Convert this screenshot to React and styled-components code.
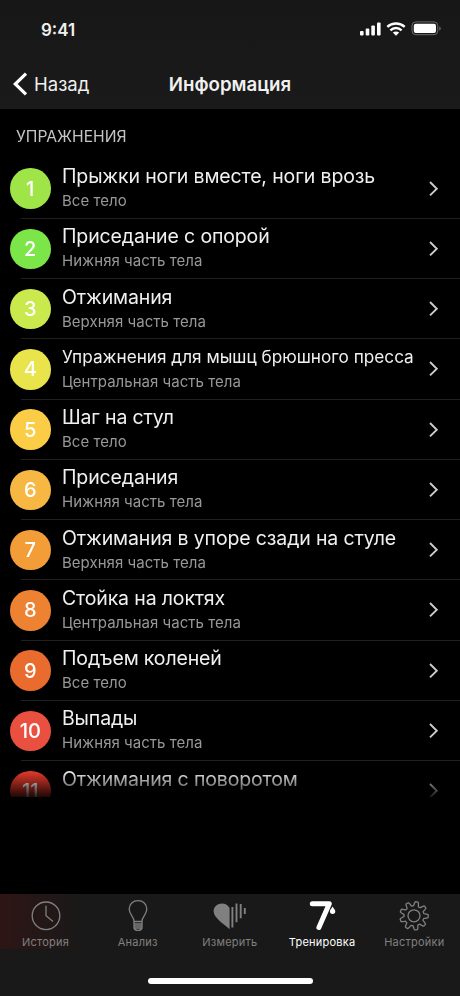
import React from 'react';
import styled, { createGlobalStyle } from 'styled-components';

const GlobalStyle = createGlobalStyle`
  * {
    box-sizing: border-box;
  }
  body {
    margin: 0;
    background: #000;
  }
`;

const Screen = styled.div`
  display: flex;
  flex-direction: column;
  width: 460px;
  height: 996px;
  overflow: hidden;
  background: #000;
  color: #f0f0f0;
  font-family: Inter, 'Liberation Sans', sans-serif;
`;

const Header = styled.header`
  flex: none;
  height: 109px;
  background: linear-gradient(#171717, #1a1a1a);
`;

const StatusBar = styled.div`
  display: flex;
  align-items: center;
  justify-content: space-between;
  height: 59px;
  padding: 0 17px 0 41px;
`;

const Clock = styled.span`
  font-size: 17px;
  font-weight: 600;
  line-height: 20px;
`;

const StatusIcons = styled.svg`
  display: block;
  width: 84px;
  height: 20px;
`;

const NavBar = styled.nav`
  display: grid;
  grid-template-columns: 1fr auto 1fr;
  align-items: center;
  height: 50px;
  padding: 0 12px;
`;

const BackButton = styled.a`
  display: flex;
  align-items: center;
  gap: 6px;
  font-size: 18.5px;
`;

const NavTitle = styled.h1`
  margin: 0;
  font-size: 18.7px;
  font-weight: 600;
`;

const List = styled.main`
  flex: none;
  height: 688px;
  overflow: hidden;
  mask-image: linear-gradient(#000 662px, transparent 692px);
`;

const SectionTitle = styled.h2`
  display: flex;
  align-items: center;
  height: 49.5px;
  margin: 0;
  padding: 5px 0 0 16px;
  color: #c4c4c4;
  font-size: 15.65px;
  font-weight: 400;
`;

const Row = styled.div`
  display: flex;
  align-items: center;
  height: 60.25px;
  padding: 0 20px 0 10px;
  background: linear-gradient(#202020, #202020) 21px 100% / 100% 1px no-repeat;
`;

const Badge = styled.div`
  display: flex;
  flex: none;
  align-items: center;
  justify-content: center;
  width: 40.5px;
  height: 40.5px;
  border-radius: 50%;
  background: ${(props) => props.$color};
  color: #fff;
  font-size: 20px;
  font-weight: 500;
`;

const Labels = styled.div`
  flex: 1;
  height: 51px;
  margin-left: 11.5px;
  white-space: nowrap;
`;

const Name = styled.div`
  height: 26px;
  font-size: ${(props) => (props.$small ? 17.2 : 19.5)}px;
  line-height: 26px;
  letter-spacing: ${(props) => (props.$small ? 0 : -0.14)}px;
`;

const Area = styled.div`
  height: 24px;
  color: #989898;
  font-size: 15px;
  line-height: 24px;
  letter-spacing: 0.03px;
`;

const Chevron = styled.svg`
  flex: none;
  width: 12px;
  height: 18px;
`;

const Spacer = styled.div`
  flex: 1;
`;

const Footer = styled.footer`
  flex: none;
  height: 102px;
  background: linear-gradient(90deg, rgba(75, 16, 16, 0.42), transparent) 0 0 / 85px 55px no-repeat, #191919;
`;

const Tabs = styled.div`
  display: grid;
  grid-template-columns: repeat(5, 92.2px);
  height: 84px;
  margin-left: -0.6px;
`;

const Tab = styled.div`
  display: flex;
  flex-direction: column;
  align-items: center;
  padding-top: 5px;
  color: ${(props) => (props.$active ? '#fff' : '#808080')};
  font-size: 11px;
  line-height: 16px;
  letter-spacing: 0.22px;

  svg {
    display: block;
    flex: none;
    width: 36px;
    height: 34px;
    margin-bottom: 1px;
  }
`;

const HomeBar = styled.div`
  width: 165px;
  height: 6px;
  margin: 0 auto;
  border-radius: 3px;
  background: #fff;
`;

const exercises = [
  { name: 'Прыжки ноги вместе, ноги врозь', area: 'Все тело', color: '#9fe548' },
  { name: 'Приседание с опорой', area: 'Нижняя часть тела', color: '#7ce548' },
  { name: 'Отжимания', area: 'Верхняя часть тела', color: '#c9e94d' },
  { name: 'Упражнения для мышц брюшного пресса', area: 'Центральная часть тела', color: '#e9e34c', small: true },
  { name: 'Шаг на стул', area: 'Все тело', color: '#fbcd46' },
  { name: 'Приседания', area: 'Нижняя часть тела', color: '#f6b842' },
  { name: 'Отжимания в упоре сзади на стуле', area: 'Верхняя часть тела', color: '#f29d38' },
  { name: 'Стойка на локтях', area: 'Центральная часть тела', color: '#ed8232' },
  { name: 'Подъем коленей', area: 'Все тело', color: '#e96b2e' },
  { name: 'Выпады', area: 'Нижняя часть тела', color: '#e9503f' },
  { name: 'Отжимания с поворотом', area: 'Верхняя часть тела', color: '#e63a2b' },
];

const HistoryIcon = () => (
  <svg viewBox="0 0 36 34" fill="none" stroke="currentColor" strokeWidth="1.3">
    <circle cx="18" cy="16.8" r="13.8" />
    <path d="M18 6.8v10l7 5.8" />
  </svg>
);

const BulbIcon = () => (
  <svg viewBox="0 0 36 34" fill="none" stroke="currentColor" strokeWidth="1.3">
    <path d="M14 22.5c0-5-4.8-6.8-4.8-12.4 0-5.2 3.8-8.4 8.8-8.4s8.8 3.2 8.8 8.4c0 5.6-4.8 7.4-4.8 12.4z" />
    <path d="M14 23v6c1 3.2 7 3.2 8 0v-6M14 25h8M14 27h8M14 29h8" />
  </svg>
);

const HeartIcon = () => (
  <svg viewBox="0 0 36 34" fill="currentColor">
    <path d="M17.6 30.2C12.5 25.2 1.6 19.2 1.6 12 1.6 4.2 13.4 1.2 17.6 9z" />
    <path d="M20.4 8v20.4M24.5 4.6v18.6M28.7 5v14.2M32.8 9v6" stroke="currentColor" strokeWidth="1.9" />
  </svg>
);

const SevenIcon = () => (
  <svg viewBox="0 0 36 34">
    <path
      d="M8.3 4.8h17L14.9 28.5"
      fill="none"
      stroke="currentColor"
      strokeWidth="5"
      strokeLinecap="round"
      strokeLinejoin="round"
    />
    <path d="M28.6 7.5c-.8 2-2.7 3-2.7 4.8a2.7 2.7 0 0 0 5.4 0c0-1.8-1.9-2.8-2.7-4.8z" fill="currentColor" />
  </svg>
);

// builds the closed outline of the cog, nine rounded teeth
const gearOutline = () => {
  const points = [];
  for (let i = 0; i < 180; i++) {
    const angle = (i / 180) * Math.PI * 2;
    const wave = Math.max(-1, Math.min(1, Math.cos(9 * (angle - 0.2)) * 1.7));
    const radius = 12.1 + wave * 2.1;
    points.push(`${(18 + radius * Math.sin(angle)).toFixed(2)} ${(16.8 - radius * Math.cos(angle)).toFixed(2)}`);
  }
  return `M${points.join('L')}Z`;
};

const GearIcon = () => (
  <svg viewBox="0 0 36 34" fill="none" stroke="currentColor" strokeWidth="1.3" strokeLinejoin="round">
    <path d={gearOutline()} />
    <circle cx="18" cy="16.8" r="6" />
  </svg>
);

const tabs = [
  { label: 'История', Icon: HistoryIcon },
  { label: 'Анализ', Icon: BulbIcon },
  { label: 'Измерить', Icon: HeartIcon },
  { label: 'Тренировка', Icon: SevenIcon, active: true },
  { label: 'Настройки', Icon: GearIcon },
];

export default function App() {
  return (
    <Screen>
      <GlobalStyle />
      <Header>
        <StatusBar>
          <Clock>9:41</Clock>
          <StatusIcons viewBox="0 0 84 20" fill="#fff">
            <rect x="1" y="11" width="3.6" height="4.6" rx="1" />
            <rect x="6.7" y="8.5" width="3.6" height="7.1" rx="1" />
            <rect x="12.3" y="5.6" width="3.6" height="10" rx="1" />
            <rect x="18" y="2.4" width="3.6" height="13.2" rx="1" />
            <g fill="none" stroke="#fff" strokeWidth="2.4">
              <path d="M28.3 6.9c5-4.6 12.4-4.6 17.4 0" />
              <path d="M31.4 10.3c3.2-3 8-3 11.2 0" />
            </g>
            <path d="M33.8 12.5c1.8-1.4 4.6-1.4 6.4 0L37 15.7z" />
            <rect x="53" y="1.9" width="25.8" height="12.8" rx="3.8" fill="none" stroke="#6c6c6c" />
            <rect x="54.8" y="3.7" width="22.2" height="9.2" rx="2" />
            <path d="M80.3 6.3c2 .8 2 3.6 0 4.4z" fill="#6c6c6c" />
          </StatusIcons>
        </StatusBar>
        <NavBar>
          <BackButton>
            <svg width="16" height="24" viewBox="0 0 16 24" fill="none" stroke="#fff" strokeWidth="3.2">
              <path d="M14 1.7L3.3 12 14 22.3" />
            </svg>
            Назад
          </BackButton>
          <NavTitle>Информация</NavTitle>
        </NavBar>
      </Header>
      <List>
        <SectionTitle>УПРАЖНЕНИЯ</SectionTitle>
        {exercises.map((exercise, index) => (
          <Row key={exercise.name}>
            <Badge $color={exercise.color}>{index + 1}</Badge>
            <Labels>
              <Name $small={exercise.small}>{exercise.name}</Name>
              <Area>{exercise.area}</Area>
            </Labels>
            <Chevron viewBox="0 0 12 18" fill="none" stroke="#ccc" strokeWidth="1.9">
              <path d="M2 2L8.8 8.7 2 15.4" />
            </Chevron>
          </Row>
        ))}
      </List>
      <Spacer />
      <Footer>
        <Tabs>
          {tabs.map(({ label, Icon, active }) => (
            <Tab key={label} $active={active}>
              <Icon />
              {label}
            </Tab>
          ))}
        </Tabs>
        <HomeBar />
      </Footer>
    </Screen>
  );
}
